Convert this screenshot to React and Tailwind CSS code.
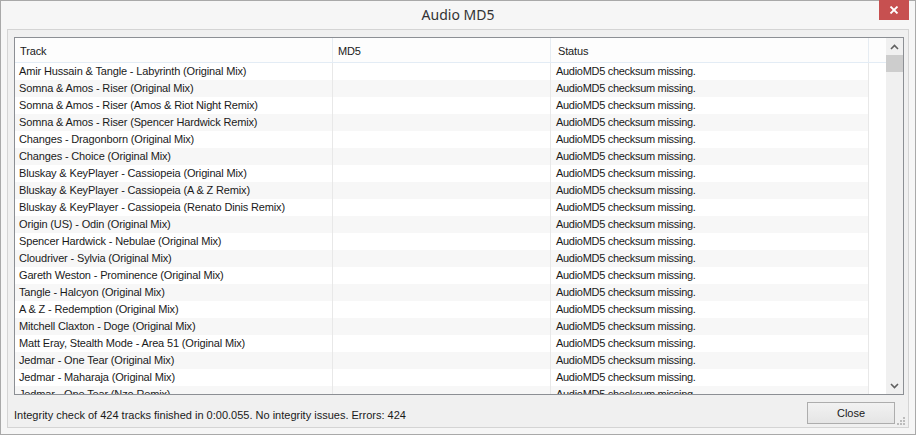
import React from "react";

const tracks = [
  "Amir Hussain & Tangle - Labyrinth (Original Mix)",
  "Somna & Amos - Riser (Original Mix)",
  "Somna & Amos - Riser (Amos & Riot Night Remix)",
  "Somna & Amos - Riser (Spencer Hardwick Remix)",
  "Changes - Dragonborn (Original Mix)",
  "Changes - Choice (Original Mix)",
  "Bluskay & KeyPlayer - Cassiopeia (Original Mix)",
  "Bluskay & KeyPlayer - Cassiopeia (A & Z Remix)",
  "Bluskay & KeyPlayer - Cassiopeia (Renato Dinis Remix)",
  "Origin (US) - Odin (Original Mix)",
  "Spencer Hardwick - Nebulae (Original Mix)",
  "Cloudriver - Sylvia (Original Mix)",
  "Gareth Weston - Prominence (Original Mix)",
  "Tangle - Halcyon (Original Mix)",
  "A & Z - Redemption (Original Mix)",
  "Mitchell Claxton - Doge (Original Mix)",
  "Matt Eray, Stealth Mode - Area 51 (Original Mix)",
  "Jedmar - One Tear (Original Mix)",
  "Jedmar - Maharaja (Original Mix)",
  "Jedmar - One Tear (Nzo Remix)",
];

const ui = { fontFamily: '"Liberation Sans", Arial, sans-serif' };

export default function App() {
  return (
    <div
      className="w-[916px] h-[435px] border border-[#a9a9a9] bg-[#f6f6f6] flex flex-col text-[11px] text-[#1a1a1a] tracking-[-0.15px]"
      style={ui}
    >
      {/* Title bar */}
      <div className="relative h-[28px] shrink-0 flex items-center justify-center">
        <span
          className="text-[14px] text-[#333] tracking-normal -mt-[1px]"
          style={{ fontFamily: '"Noto Sans", "Open Sans", sans-serif' }}
        >
          Audio MD5
        </span>
        <div className="absolute right-[6px] -top-[1px] w-[30px] h-[20px] bg-[#c75050] flex items-center justify-center">
          <svg width="10" height="8" viewBox="0 0 10 8">
            <path d="M1.5 0.5 L8.5 7.5 M8.5 0.5 L1.5 7.5" stroke="#fff" strokeWidth="1.8" />
          </svg>
        </div>
      </div>

      {/* Client area */}
      <div className="relative flex-1 mx-[6px] mb-[6px] border border-[#d4d4d4] bg-[#f0f0f0] flex flex-col pt-[7px] pl-[6px] pr-[4px]">
        {/* List view */}
        <div className="h-[358px] border border-[#8c8f94] bg-white flex overflow-hidden">
          <div className="flex-1 flex flex-col overflow-hidden">
            {/* Header */}
            <div className="h-[25px] shrink-0 flex bg-[#fdfdfd] border-b border-[#e3ecf5]">
              <div className="w-[318px] pl-[5px] pt-[2px] flex items-center border-r border-[#e6ecf2]">Track</div>
              <div className="w-[218px] pl-[5px] pt-[2px] flex items-center border-r border-[#e6ecf2]">MD5</div>
              <div className="w-[318px] pl-[7px] pt-[2px] flex items-center border-r border-[#e6ecf2]">Status</div>
              <div className="flex-1"></div>
            </div>
            {/* Rows */}
            <div className="flex flex-col">
              {tracks.map((t, i) => (
                <div key={i} className="h-[17px] shrink-0 flex">
                  <div
                    className={
                      "flex " + (i % 2 === 1 ? "bg-[#f7f7f7]" : "bg-white")
                    }
                  >
                    <div className="w-[318px] pl-[4px] flex items-center whitespace-nowrap overflow-hidden border-r border-[#e8e8e8]">
                      {t}
                    </div>
                    <div className="w-[218px] border-r border-[#e8e8e8]"></div>
                    <div className="w-[318px] pl-[5px] flex items-center whitespace-nowrap border-r border-[#e8e8e8] tracking-[-0.3px]">
                      AudioMD5 checksum missing.
                    </div>
                  </div>
                  <div className="flex-1 bg-white"></div>
                </div>
              ))}
            </div>
          </div>
          {/* Scrollbar */}
          <div className="w-[17px] shrink-0 bg-[#f0f0f0] flex flex-col">
            <div className="h-[17px] flex items-center justify-center">
              <svg width="9" height="6" viewBox="0 0 9 6">
                <path d="M1 5 L4.5 1.5 L8 5" stroke="#606060" strokeWidth="1.6" fill="none" />
              </svg>
            </div>
            <div className="h-[17px] bg-[#cdcdcd]"></div>
            <div className="flex-1"></div>
            <div className="h-[17px] flex items-center justify-center">
              <svg width="9" height="6" viewBox="0 0 9 6">
                <path d="M1 1 L4.5 4.5 L8 1" stroke="#606060" strokeWidth="1.6" fill="none" />
              </svg>
            </div>
          </div>
        </div>

        {/* Footer */}
        <div className="flex-1 flex items-start pt-[7px] pr-[9px]">
          <div className="flex-1 pt-[5px] tracking-normal">
            Integrity check of 424 tracks finished in 0:00.055. No integrity issues. Errors: 424
          </div>
          <button
            className="w-[88px] h-[22px] border border-[#adadad] bg-gradient-to-b from-[#f2f2f2] to-[#e5e5e5] flex items-center justify-center text-[11px] text-[#1a1a1a] tracking-normal"
            style={ui}
          >
            Close
          </button>
        </div>

        {/* Size grip */}
        <svg className="absolute right-[2px] bottom-[1px]" width="10" height="10" viewBox="0 0 10 10">
          <rect x="7" y="1" width="2" height="2" fill="#bcbcbc" />
          <rect x="4" y="4" width="2" height="2" fill="#bcbcbc" />
          <rect x="7" y="4" width="2" height="2" fill="#bcbcbc" />
          <rect x="1" y="7" width="2" height="2" fill="#bcbcbc" />
          <rect x="4" y="7" width="2" height="2" fill="#bcbcbc" />
          <rect x="7" y="7" width="2" height="2" fill="#bcbcbc" />
        </svg>
      </div>
    </div>
  );
}
